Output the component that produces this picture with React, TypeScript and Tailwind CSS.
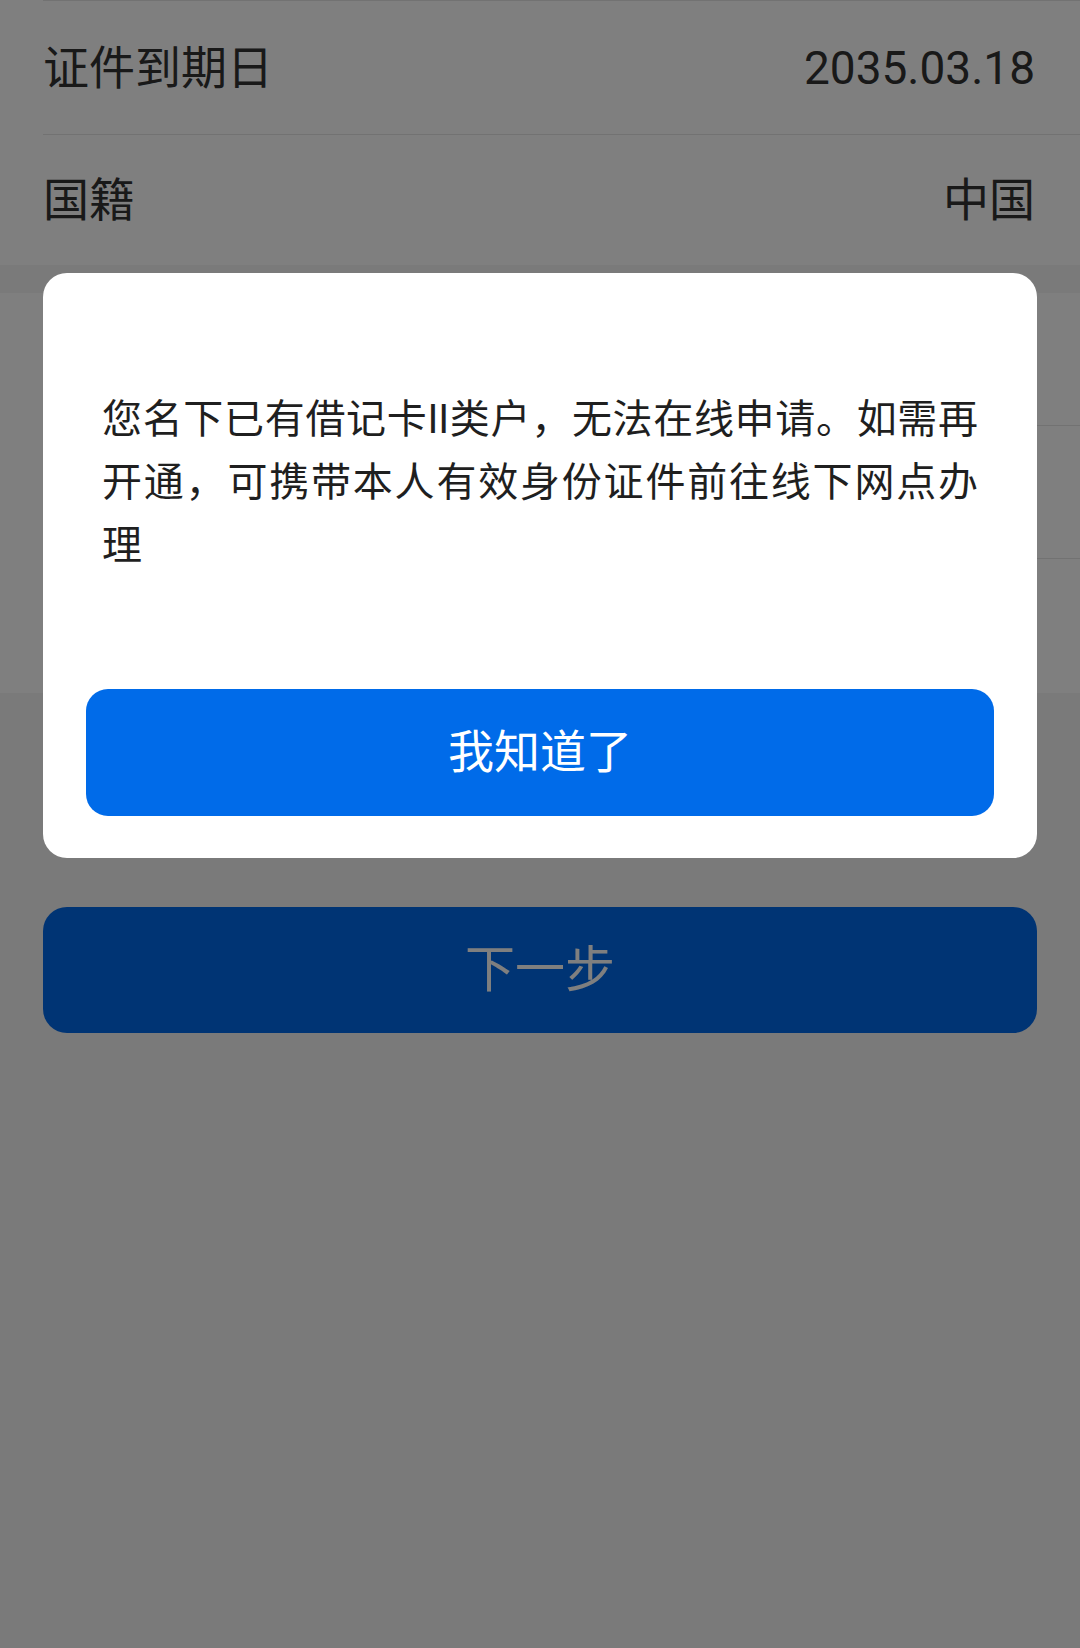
const infoRows = [
  { label: '证件到期日', value: '2035.03.18' },
  { label: '国籍', value: '中国' },
];

export default function App() {
  return (
    <div className="relative min-h-[1648px] w-full bg-[#f4f4f4] font-['Roboto','Noto_Sans_CJK_SC',sans-serif] text-[#333]">
      {/* info list */}
      <div className="bg-white">
        {infoRows.map((row, i) => (
          <div
            key={row.label}
            className={`ml-[43px] flex items-center justify-between border-t border-[#e5e5e5] pr-[45px] ${i === 0 ? 'h-[134px]' : 'h-[131px]'}`}
          >
            <span className="text-[46px] leading-none">{row.label}</span>
            <span className="text-[46px] leading-none">{row.value}</span>
          </div>
        ))}
      </div>

      {/* second group (hidden behind the dialog) */}
      <div className="mt-[28px] bg-white">
        <div className="ml-[43px] h-[132px]" />
        <div className="ml-[43px] h-[133px] border-t border-[#e5e5e5]" />
        <div className="ml-[43px] h-[135px] border-t border-[#e5e5e5]" />
      </div>

      <div className="mt-[214px] px-[43px]">
        <button className="flex h-[126px] w-full items-center justify-center rounded-[24px] bg-[#0068e8] text-[50px] text-white">
          下一步
        </button>
      </div>

      {/* mask */}
      <div className="absolute inset-0 bg-black/50" />

      {/* dialog */}
      <div className="absolute left-[43px] right-[43px] top-[273px] rounded-[24px] bg-white px-[43px] pb-[42px] pt-[115px]">
        <div className="px-[16px] text-[40px] leading-[63px] text-[#1f1f1f]">
          <div className="[text-align-last:justify]">您名下已有借记卡II类户，无法在线申请。如需再</div>
          <div className="[text-align-last:justify]">开通，可携带本人有效身份证件前往线下网点办</div>
          <div>理</div>
        </div>
        <button className="mt-[112px] flex h-[127px] w-full items-center justify-center rounded-[22px] bg-[#006be9] text-[46px] text-white">
          我知道了
        </button>
      </div>
    </div>
  );
}
